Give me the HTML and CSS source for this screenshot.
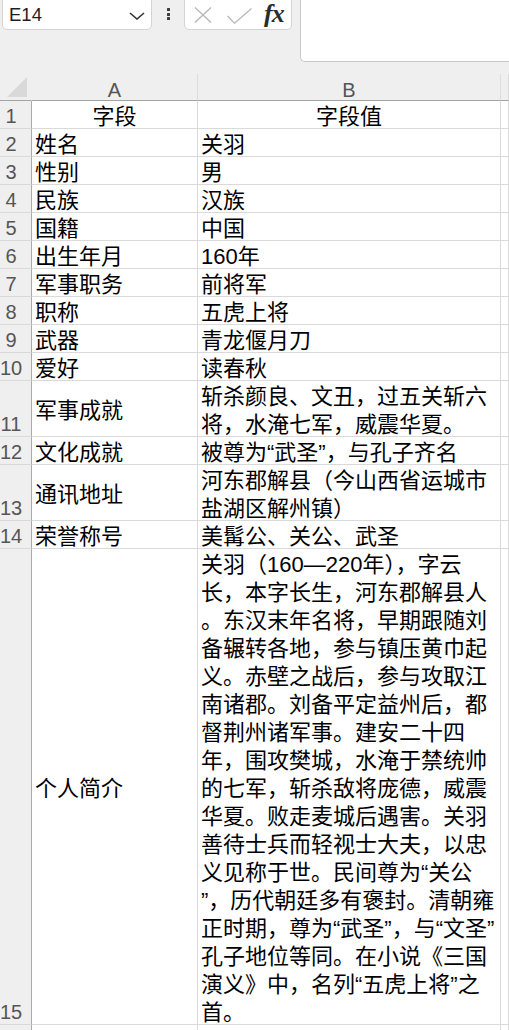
FILE: index.html
```html
<!DOCTYPE html>
<html lang="zh-CN">
<head>
<meta charset="utf-8">
<title>Sheet</title>
<link rel="stylesheet" href="styles.css">
</head>
<body>
<div class="toolbar">
  <div class="namebox">
    <span class="cellref">E14</span>
    <svg class="chev" width="16" height="8" viewBox="0 0 16 8"><path d="M1 1 L8 7 L15 1" fill="none" stroke="#333" stroke-width="1.6"/></svg>
  </div>
  <div class="dots"><i></i><i></i><i></i></div>
  <div class="fbox">
    <svg class="icon-x" width="18" height="16" viewBox="0 0 18 16"><path d="M1 0.5 L17 15.5 M17 0.5 L1 15.5" fill="none" stroke="#b9b9b9" stroke-width="1.4"/></svg>
    <svg class="icon-ok" width="25" height="16" viewBox="0 0 25 16"><path d="M0.5 8 L7.5 15.2 L24.5 0.5" fill="none" stroke="#bcbcbc" stroke-width="1.4"/></svg>
    <span class="fx">fx</span>
  </div>
  <div class="fbar"></div>
</div>

<div class="sheet">
  <div class="corner"><span class="tri"></span></div>
  <div class="ch">A</div>
  <div class="ch">B</div>
  <div class="ch"></div>

  <div class="rh">1</div><div class="c a center">字段</div><div class="c b center">字段值</div><div class="c"></div>
  <div class="rh">2</div><div class="c a">姓名</div><div class="c b">关羽</div><div class="c"></div>
  <div class="rh">3</div><div class="c a">性别</div><div class="c b">男</div><div class="c"></div>
  <div class="rh">4</div><div class="c a">民族</div><div class="c b">汉族</div><div class="c"></div>
  <div class="rh">5</div><div class="c a">国籍</div><div class="c b">中国</div><div class="c"></div>
  <div class="rh">6</div><div class="c a">出生年月</div><div class="c b">160年</div><div class="c"></div>
  <div class="rh">7</div><div class="c a">军事职务</div><div class="c b">前将军</div><div class="c"></div>
  <div class="rh">8</div><div class="c a">职称</div><div class="c b">五虎上将</div><div class="c"></div>
  <div class="rh">9</div><div class="c a">武器</div><div class="c b">青龙偃月刀</div><div class="c"></div>
  <div class="rh">10</div><div class="c a">爱好</div><div class="c b">读春秋</div><div class="c"></div>
  <div class="rh">11</div><div class="c a">军事成就</div><div class="c b">斩杀颜良、文丑，过五关斩六<br>将，水淹七军，威震华夏。</div><div class="c"></div>
  <div class="rh">12</div><div class="c a">文化成就</div><div class="c b">被尊为“武圣”，与孔子齐名</div><div class="c"></div>
  <div class="rh">13</div><div class="c a">通讯地址</div><div class="c b">河东郡解县（今山西省运城市<br>盐湖区解州镇）</div><div class="c"></div>
  <div class="rh">14</div><div class="c a">荣誉称号</div><div class="c b">美髯公、关公、武圣</div><div class="c"></div>
  <div class="rh">15</div><div class="c a">个人简介</div><div class="c b">关羽（160—220年），字云<br>长，本字长生，河东郡解县人<br>。东汉末年名将，早期跟随刘<br>备辗转各地，参与镇压黄巾起<br>义。赤壁之战后，参与攻取江<br>南诸郡。刘备平定益州后，都<br>督荆州诸军事。建安二十四<br>年，围攻樊城，水淹于禁统帅<br>的七军，斩杀敌将庞德，威震<br>华夏。败走麦城后遇害。关羽<br>善待士兵而轻视士大夫，以忠<br>义见称于世。民间尊为“关公<br>”，历代朝廷多有褒封。清朝雍<br>正时期，尊为“武圣”，与“文圣”<br>孔子地位等同。在小说《三国<br>演义》中，名列“五虎上将”之<br>首。</div><div class="c"></div>
  <div class="rh"></div><div class="c a"></div><div class="c b"></div><div class="c"></div>
</div>
</body>
</html>
```
FILE: styles.css
```css
html, body {
  margin: 0;
  padding: 0;
}
body {
  width: 509px;
  height: 1030px;
  overflow: hidden;
  background: #ffffff;
  font-family: "Liberation Sans", "Noto Sans CJK SC", sans-serif;
}

/* ---------- toolbar ---------- */
.toolbar {
  height: 74px;
  background: #efefef;
  display: flex;
  align-items: flex-start;
  overflow: hidden;
}
.namebox {
  margin-left: 2px;
  margin-top: -6px;
  width: 150px;
  height: 36px;
  box-sizing: border-box;
  background: #ffffff;
  border: 1px solid #d4d4d4;
  border-radius: 5px;
  display: flex;
  align-items: center;
  justify-content: space-between;
  padding: 6px 6px 0 6px;
}
.cellref {
  font-size: 18.5px;
  color: #1f1f1f;
}
.chev {
  display: block;
  margin-top: 2px;
}
.dots {
  margin-left: 15px;
  margin-top: 8px;
  width: 4px;
  display: flex;
  flex-direction: column;
  gap: 1.5px;
}
.dots i {
  display: block;
  width: 3px;
  height: 3px;
  background: #3a3a3a;
  border-radius: 0.5px;
}
.fbox {
  margin-left: 13px;
  margin-top: -6px;
  width: 108px;
  height: 36px;
  box-sizing: border-box;
  background: #ffffff;
  border: 1px solid #d4d4d4;
  border-radius: 5px;
  display: flex;
  align-items: flex-start;
  padding-top: 6px;
}
.icon-x {
  display: block;
  margin-left: 9px;
  margin-top: 6px;
}
.icon-ok {
  display: block;
  margin-left: 15px;
  margin-top: 7px;
}
.fx {
  margin-left: 12px;
  margin-top: 0;
  font-family: "Liberation Serif", serif;
  font-style: italic;
  font-weight: bold;
  font-size: 26px;
  line-height: 26px;
  color: #2b2b2b;
  letter-spacing: -1px;
}
.fbar {
  margin-left: 8px;
  margin-top: -6px;
  flex: 1;
  height: 68px;
  box-sizing: border-box;
  background: #ffffff;
  border: 1px solid #c9c9c9;
  border-right: none;
  border-radius: 0 0 0 5px;
}

/* ---------- sheet ---------- */
.sheet {
  display: grid;
  grid-template-columns: 32px 166px 303px 8px;
  grid-template-rows: 27px repeat(10, 28px) 56px 28px 56px 28px 476px 28px;
  width: 509px;
}
.corner {
  background: #efefef;
  border-bottom: 1px solid #a3a3a3;
  border-right: 1px solid #efefef;
  box-sizing: border-box;
  position: relative;
}
.tri {
  position: absolute;
  left: 7px;
  top: 3px;
  width: 0;
  height: 0;
  border-left: 20px solid transparent;
  border-bottom: 20px solid #d9d9d9;
}
.ch {
  background: #efefef;
  box-sizing: border-box;
  border-right: 1px solid #dcdcdc;
  border-bottom: 1px solid #a3a3a3;
  color: #555555;
  font-size: 20px;
  line-height: 26px;
  padding-top: 3px;
  text-align: center;
  overflow: hidden;
}
.rh {
  background: #efefef;
  box-sizing: border-box;
  border-right: 1px solid #ababab;
  border-bottom: 1px solid #d9d9d9;
  color: #555555;
  font-size: 20px;
  line-height: 24px;
  display: flex;
  align-items: flex-end;
  justify-content: center;
  padding-right: 9px;
  overflow: hidden;
}
.c {
  box-sizing: border-box;
  border-right: 1px solid #dadada;
  border-bottom: 1px solid #dadada;
  background: #ffffff;
  color: #000000;
  font-size: 22px;
  line-height: 28px;
  white-space: nowrap;
  overflow: hidden;
}
.a {
  display: flex;
  align-items: center;
  padding: 4px 0 0 3px;
}
.b {
  padding: 2px 0 0 3px;
}
.a.center {
  justify-content: center;
  padding-left: 0;
}
.b.center {
  text-align: center;
  padding-left: 0;
}
```
